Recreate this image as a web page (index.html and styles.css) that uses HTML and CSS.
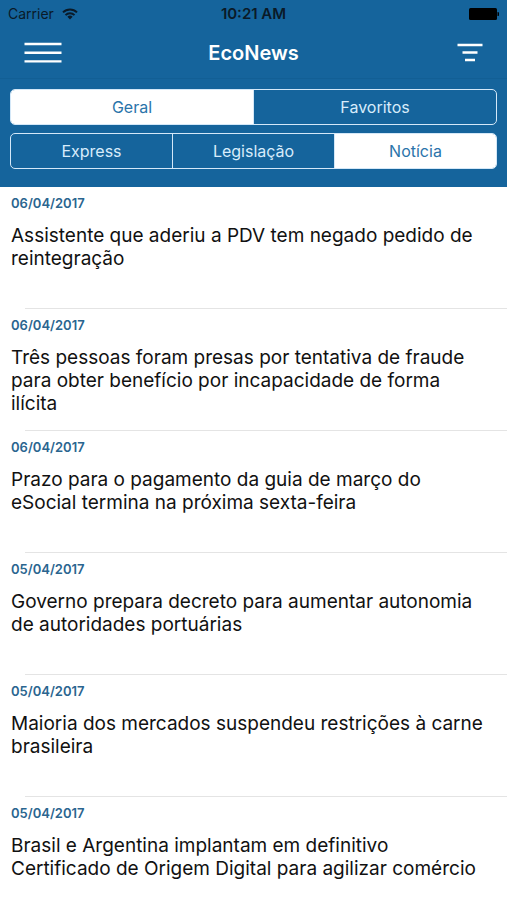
FILE: index.html
```html
<!DOCTYPE html>
<html lang="pt-BR">
<head>
<meta charset="UTF-8" />
<meta name="viewport" content="width=device-width, initial-scale=1" />
<title>EcoNews</title>
<link rel="stylesheet" href="styles.css">
</head>
<body>

<header class="header">
  <!-- Status bar -->
  <div class="status-bar">
    <div class="carrier">
      <span>Carrier</span>
      <svg class="wifi" viewBox="0 0 16 12" aria-hidden="true">
        <path d="M1 4.400a10 10 0 0 1 14 0M3.500 7.100a6.400 6.400 0 0 1 9 0"/>
        <path class="wifi-dot" d="M8 11.400L5.400 8.800a3.800 3.800 0 0 1 5.200 0z"/>
      </svg>
    </div>
    <span class="clock">10:21 AM</span>
    <svg class="battery" viewBox="0 0 30 12" aria-hidden="true">
      <rect width="28" height="12" rx="1.5"/>
      <path d="M28.500 4a2 2 0 0 1 0 4z"/>
    </svg>
  </div>

  <!-- Navigation bar -->
  <div class="nav-bar">
    <button class="icon-button" aria-label="Menu">
      <svg width="38" height="22" viewBox="0 0 38 22"><path d="M0.500 2H37.500M0.500 10.700H37.500M0.500 19.400H37.500"/></svg>
    </button>
    <h1 class="title">EcoNews</h1>
    <button class="icon-button filter-button" aria-label="Filtrar">
      <svg width="26" height="20" viewBox="0 0 26 20"><path d="M0.500 2H25.500M5.500 9.500H20.500M8 17H18"/></svg>
    </button>
  </div>

  <!-- Filters -->
  <div class="filters">
    <div class="segmented" role="group" aria-label="Lista">
      <button class="segment active" aria-pressed="true">Geral</button>
      <button class="segment" aria-pressed="false">Favoritos</button>
    </div>
    <div class="segmented" role="group" aria-label="Tipo">
      <button class="segment" aria-pressed="false">Express</button>
      <button class="segment" aria-pressed="false">Legislação</button>
      <button class="segment active" aria-pressed="true">Notícia</button>
    </div>
  </div>
</header>

<!-- News list -->
<main class="news-list">
  <a class="news-item" href="#">
    <time class="news-date" datetime="2017-04-06">06/04/2017</time>
    <h2 class="news-title">Assistente que aderiu a PDV tem negado pedido de reintegração</h2>
  </a>
  <a class="news-item" href="#">
    <time class="news-date" datetime="2017-04-06">06/04/2017</time>
    <h2 class="news-title">Três pessoas foram presas por tentativa de fraude para obter benefício por incapacidade de forma ilícita</h2>
  </a>
  <a class="news-item" href="#">
    <time class="news-date" datetime="2017-04-06">06/04/2017</time>
    <h2 class="news-title">Prazo para o pagamento da guia de março do eSocial termina na próxima sexta-feira</h2>
  </a>
  <a class="news-item" href="#">
    <time class="news-date" datetime="2017-04-05">05/04/2017</time>
    <h2 class="news-title">Governo prepara decreto para aumentar autonomia de autoridades portuárias</h2>
  </a>
  <a class="news-item" href="#">
    <time class="news-date" datetime="2017-04-05">05/04/2017</time>
    <h2 class="news-title">Maioria dos mercados suspendeu restrições à carne brasileira</h2>
  </a>
  <a class="news-item" href="#">
    <time class="news-date" datetime="2017-04-05">05/04/2017</time>
    <h2 class="news-title">Brasil e Argentina implantam em definitivo Certificado de Origem Digital para agilizar comércio</h2>
  </a>
</main>

</body>
</html>
```

FILE: styles.css
```css
/* Reset and base */
* {
  box-sizing: border-box;
}
body {
  margin: 0;
  font-family: Inter, "Liberation Sans", sans-serif;
  background-color: #fff;
  color: #111;
}
button {
  margin: 0;
  border: none;
  font-family: inherit;
  cursor: pointer;
}
/* Header */
.header {
  background-color: #15649c;
}
/* Status bar */
.status-bar {
  display: grid;
  grid-template-columns: 1fr auto 1fr;
  align-items: center;
  height: 27px;
  padding: 0 8px;
  font-size: 14px;
  color: #0a1a28;
}
.carrier {
  display: flex;
  align-items: center;
  gap: 8px;
}
.wifi {
  width: 16px;
  height: 12px;
  fill: none;
  stroke: #0a1a28;
  stroke-width: 2;
}
.wifi .wifi-dot {
  fill: #0a1a28;
  stroke: none;
}
.clock {
  font-size: 15px;
  font-weight: 600;
}
.battery {
  justify-self: end;
  width: 30px;
  height: 12px;
  fill: #000;
}
/* Navigation bar */
.nav-bar {
  display: grid;
  grid-template-columns: 1fr auto 1fr;
  align-items: center;
  height: 52px;
  padding: 0 24px;
  border-bottom: 1px solid #125f95;
}
.title {
  margin: 0;
  font-size: 20px;
  font-weight: 600;
  color: #fff;
}
.icon-button {
  display: flex;
  justify-self: start;
  padding: 0;
  background: none;
}
.icon-button svg {
  fill: none;
  stroke: #fff;
  stroke-width: 2.4;
}
.filter-button {
  justify-self: end;
}
/* Segmented controls */
.filters {
  display: flex;
  flex-direction: column;
  gap: 8px;
  padding: 10px 10px 18px;
}
.segmented {
  display: flex;
  height: 36px;
  border: 1px solid #d4e8f8;
  border-radius: 5px;
  overflow: hidden;
}
.segment {
  flex: 1;
  padding: 0;
  background: none;
  font-size: 16px;
  color: #d8ecfb;
}
.segment + .segment {
  border-left: 1px solid #d4e8f8;
}
.segment.active {
  background-color: #fff;
  color: #2a74aa;
}
/* News list */
.news-item {
  display: block;
  position: relative;
  min-height: 122px;
  padding: 8px 20px 0 11px;
  color: inherit;
  text-decoration: none;
}
/* Inset separator */
.news-item:not(:last-child)::after {
  content: "";
  position: absolute;
  left: 25px;
  right: 0;
  bottom: 0;
  border-bottom: 1px solid #e4e4e4;
}
.news-date {
  display: block;
  font-size: 13px;
  font-weight: 600;
  line-height: 16px;
  color: #2a658f;
}
.news-title {
  margin: 13px 0 0;
  font-size: 19px;
  font-weight: 400;
  line-height: 23px;
}
```
